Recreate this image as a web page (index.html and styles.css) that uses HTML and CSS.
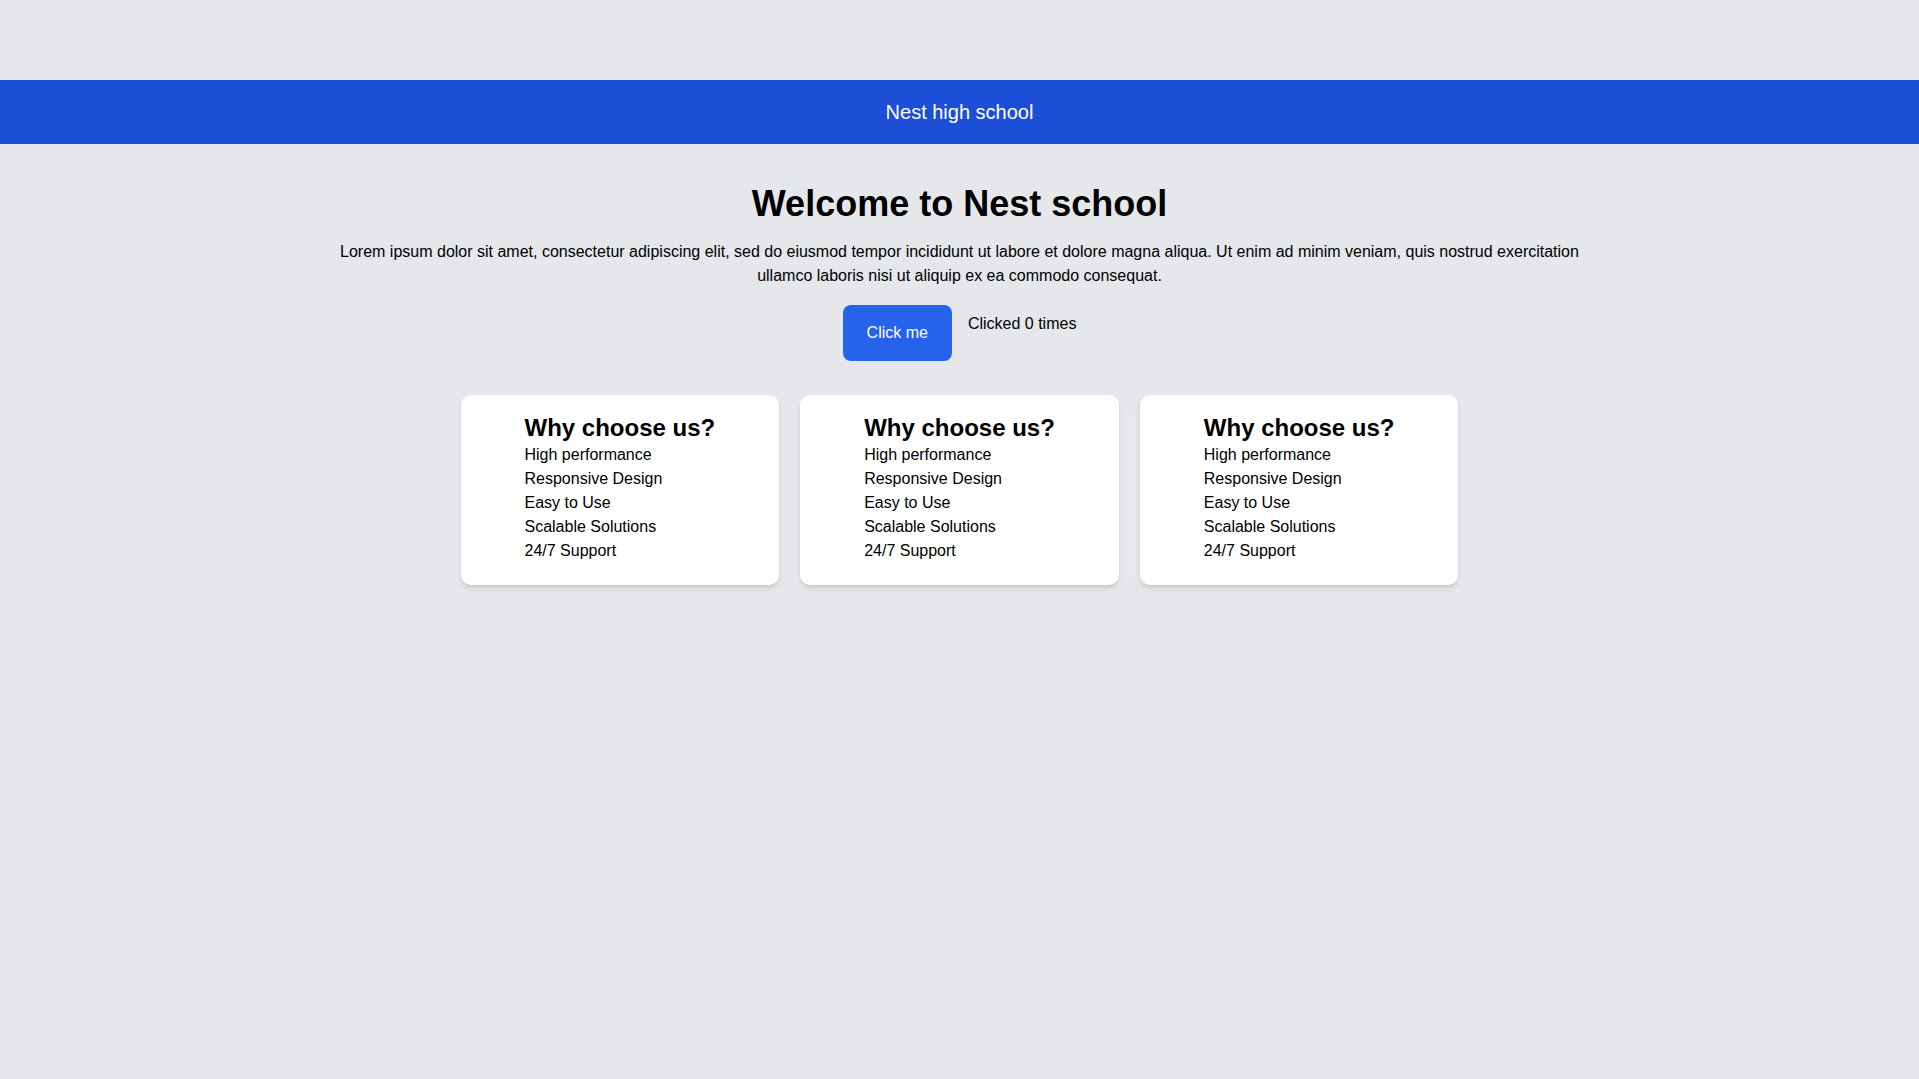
FILE: index.html
```html
<!DOCTYPE html>
<html lang="en">
<head>
<meta charset="utf-8">
<title>Nest high school</title>
<link rel="stylesheet" href="styles.css">
</head>
<body>
<header class="site-header">Nest high school</header>
<main class="main">
  <h1 class="title">Welcome to Nest school</h1>
  <p class="intro">Lorem ipsum dolor sit amet, consectetur adipiscing elit, sed do eiusmod tempor incididunt ut labore et dolore magna aliqua. Ut enim ad minim veniam, quis nostrud exercitation ullamco laboris nisi ut aliquip ex ea commodo consequat.</p>
  <div class="actions">
    <button class="btn" type="button">Click me</button>
    <span class="count">Clicked 0 times</span>
  </div>
  <section class="cards">
    <div class="card">
      <div class="card-body">
        <h2 class="card-title">Why choose us?</h2>
        <ul class="card-list">
          <li>High performance</li>
          <li>Responsive Design</li>
          <li>Easy to Use</li>
          <li>Scalable Solutions</li>
          <li>24/7 Support</li>
        </ul>
      </div>
    </div>
    <div class="card">
      <div class="card-body">
        <h2 class="card-title">Why choose us?</h2>
        <ul class="card-list">
          <li>High performance</li>
          <li>Responsive Design</li>
          <li>Easy to Use</li>
          <li>Scalable Solutions</li>
          <li>24/7 Support</li>
        </ul>
      </div>
    </div>
    <div class="card">
      <div class="card-body">
        <h2 class="card-title">Why choose us?</h2>
        <ul class="card-list">
          <li>High performance</li>
          <li>Responsive Design</li>
          <li>Easy to Use</li>
          <li>Scalable Solutions</li>
          <li>24/7 Support</li>
        </ul>
      </div>
    </div>
  </section>
</main>
</body>
</html>
```

FILE: styles.css
```css
* { box-sizing: border-box; }

html, body {
  margin: 0;
  padding: 0;
}

body {
  background: #e5e7eb;
  color: #000;
  font-family: "Liberation Sans", Arial, sans-serif;
  padding-top: 80px;
  min-height: 1079px;
}

.site-header {
  background: #1d4ed8;
  color: #fff;
  text-align: center;
  font-size: 20px;
  line-height: 28px;
  padding: 18px 0;
}

.main {
  max-width: 1280px;
  margin: 0 auto;
  text-align: center;
}

.title {
  margin: 40px 0 16px;
  font-size: 36px;
  line-height: 40px;
  font-weight: 700;
}

.intro {
  margin: 0;
  font-size: 16px;
  line-height: 24px;
}

.actions {
  display: flex;
  justify-content: center;
  align-items: flex-start;
  gap: 16px;
  margin-top: 17px;
}

.btn {
  background: #2563eb;
  color: #fff;
  border: none;
  border-radius: 8px;
  padding: 16px 24px;
  font-family: inherit;
  font-size: 16px;
  line-height: 24px;
  cursor: pointer;
}

.count {
  font-size: 16px;
  line-height: 24px;
  padding-top: 7px;
}

.cards {
  display: grid;
  grid-template-columns: repeat(3, 1fr);
  gap: 21px;
  width: 998px;
  margin: 34px auto 0;
}

.card {
  background: #fff;
  border-radius: 10px;
  box-shadow: 0 4px 6px -1px rgba(0, 0, 0, 0.1), 0 2px 4px -2px rgba(0, 0, 0, 0.1);
  padding: 18px 0 22px;
  display: flex;
  justify-content: center;
}

.card-body {
  text-align: left;
}

.card-title {
  margin: 0;
  font-size: 24px;
  line-height: 30px;
  font-weight: 700;
}

.card-list {
  list-style: none;
  margin: 0;
  padding: 0;
  font-size: 16px;
  line-height: 24px;
}
```
